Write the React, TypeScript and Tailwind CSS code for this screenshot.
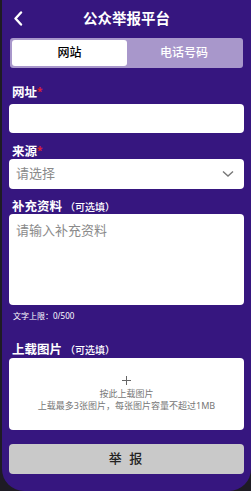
import React from "react";

const font = { fontFamily: '"Noto Sans", "Noto Sans CJK SC", sans-serif' };

const Label: React.FC<{ text: string; required?: boolean; optional?: boolean }> = ({ text, required, optional }) => (
  <div className="flex items-baseline h-[14px] pl-[3px] text-white font-bold text-[12.5px] leading-[14px]">
    <span>{text}</span>
    {required && <span className="text-[#e0202a] text-[10px] self-start leading-[10px]">*</span>}
    {optional && <span className="text-[10px] font-medium ml-[3px]">（可选填）</span>}
  </div>
);

export default function App() {
  return (
    <div className="w-[251px] h-[491px] bg-[#1e1b24]" style={font}>
      <div className="ml-[2px] h-full bg-[#36167f] rounded-b-[22px] flex flex-col px-[7px]">
        {/* header */}
        <div className="relative h-[36px] flex items-center justify-center">
          <svg className="absolute left-[4px] top-[11px]" width="10" height="15" viewBox="0 0 10 15">
            <path d="M8 1.5 L2.5 7.5 L8 13.5" stroke="white" strokeWidth="2.4" fill="none" strokeLinecap="round" strokeLinejoin="round" />
          </svg>
          <span className="text-white font-bold text-[14.5px] mt-[1px]">公众举报平台</span>
        </div>

        {/* tabs */}
        <div className="mt-[2px] ml-[1px] mr-[1px] h-[30px] bg-[#a897cb] rounded-[3px] p-[2px] flex">
          <div className="w-[115px] bg-white rounded-[3px] flex items-center justify-center text-[12px] font-medium text-black">网站</div>
          <div className="flex-1 flex items-center justify-center text-[12px] font-medium text-white">电话号码</div>
        </div>

        {/* url */}
        <div className="mt-[18px]">
          <Label text="网址" required />
        </div>
        <div className="mt-[4px] h-[29px] bg-white rounded-[4px]" />

        {/* source */}
        <div className="mt-[12px]">
          <Label text="来源" required />
        </div>
        <div className="h-[30px] bg-white rounded-[4px] flex items-center justify-between px-[7px]">
          <span className="text-[13px] text-[#8a8a8a]">请选择</span>
          <svg width="12" height="8" viewBox="0 0 12 8" className="mr-[3px]">
            <path d="M1 1.5 L6 6 L11 1.5" stroke="#777" strokeWidth="1.4" fill="none" />
          </svg>
        </div>

        {/* extra */}
        <div className="mt-[11px]">
          <Label text="补充资料" optional />
        </div>
        <div className="h-[91px] bg-white rounded-[4px] px-[7px] pt-[3px]">
          <span className="text-[13px] text-[#8a8a8a] leading-[16px]">请输入补充资料</span>
        </div>
        <div className="mt-[6px] pl-[4px] text-white text-[8px] leading-[10px]">文字上限：0/500</div>

        {/* upload */}
        <div className="mt-[22px]">
          <Label text="上载图片" optional />
        </div>
        <div className="mt-[1px] h-[72px] bg-white rounded-[4px] flex flex-col items-center justify-center text-[#777] text-[9px] leading-[12px]">
          <svg width="9" height="9" viewBox="0 0 9 9" className="mb-[3px]">
            <path d="M4.5 0 V9 M0 4.5 H9" stroke="#666" strokeWidth="1" />
          </svg>
          <span>按此上载图片</span>
          <span>上载最多3张图片，每张图片容量不超过1MB</span>
        </div>

        {/* submit */}
        <div className="mt-[14px] h-[30px] bg-[#c9c9c9] rounded-[4px] flex items-center justify-center text-[13px] font-medium text-[#222] tracking-[2px]">
          举 报
        </div>
      </div>
    </div>
  );
}
